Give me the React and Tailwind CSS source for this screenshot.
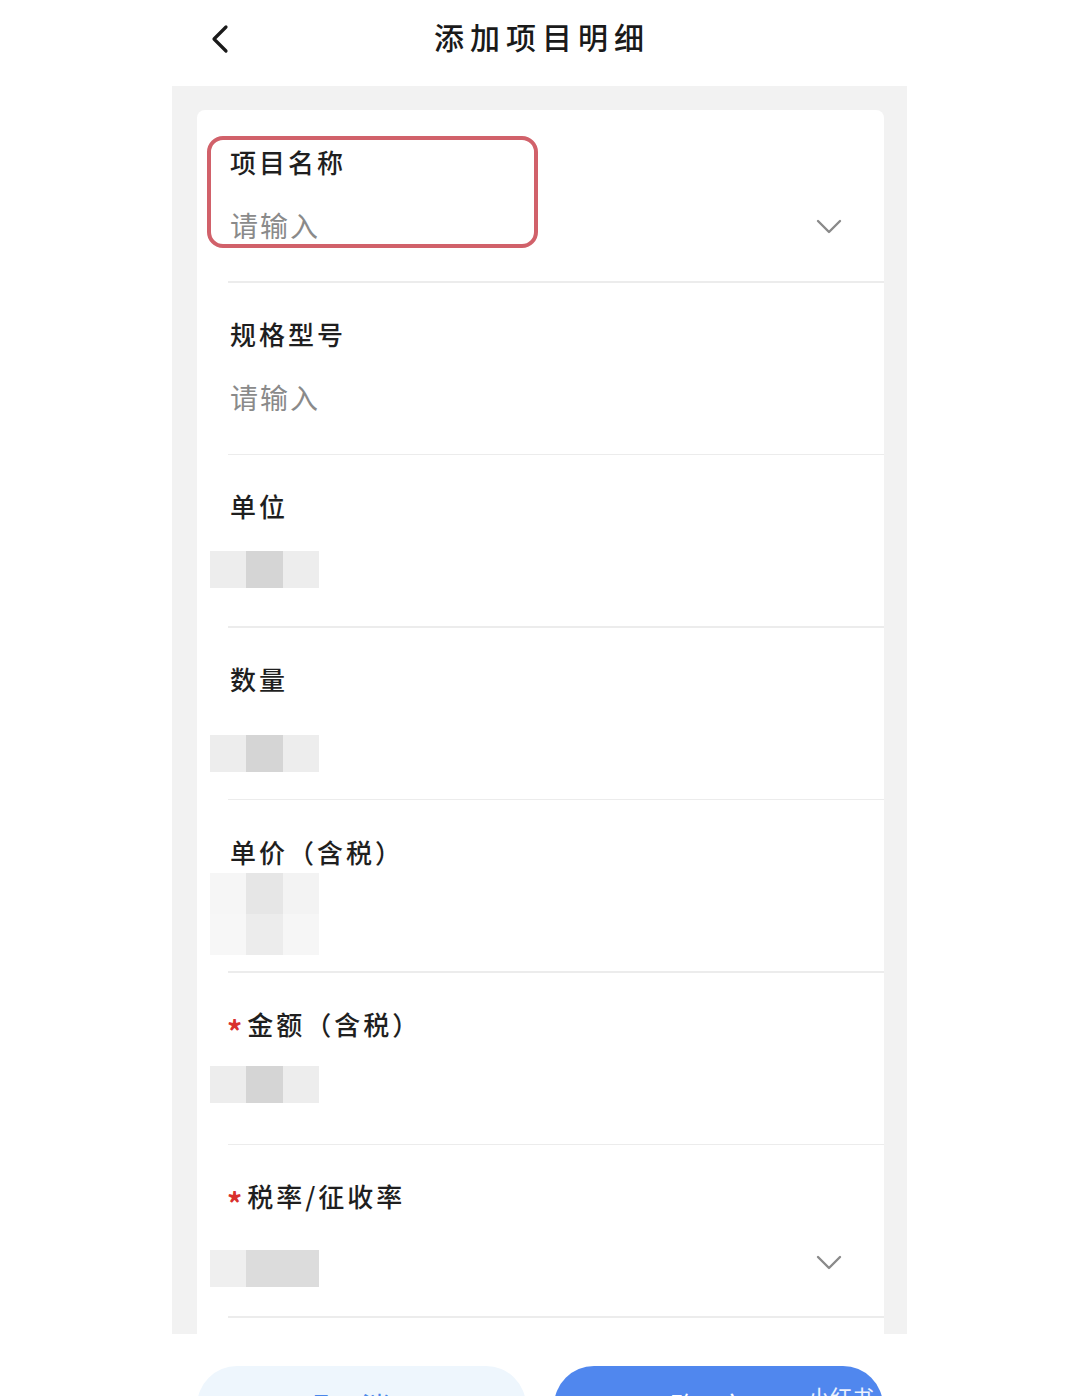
import React from "react";

const font = { fontFamily: '"Noto Sans CJK SC", "Noto Sans", sans-serif' };

function ChevronDown({ className = "" }) {
  return (
    <svg className={className} width="26" height="16" viewBox="0 0 26 16" fill="none">
      <polyline points="2,2 13,13 24,2" stroke="#8a8a8a" strokeWidth="2.4" strokeLinecap="round" strokeLinejoin="round" />
    </svg>
  );
}

function Mosaic({ variant }) {
  if (variant === "double") {
    return (
      <div className="flex flex-col">
        <div className="flex">
          <div className="w-[36px] h-[41px] bg-[#f6f6f6]" />
          <div className="w-[37px] h-[41px] bg-[#e6e6e6]" />
          <div className="w-[36px] h-[41px] bg-[#f3f3f3]" />
        </div>
        <div className="flex">
          <div className="w-[36px] h-[41px] bg-[#f7f7f7]" />
          <div className="w-[37px] h-[41px] bg-[#ececec]" />
          <div className="w-[36px] h-[41px] bg-[#f6f6f6]" />
        </div>
      </div>
    );
  }
  if (variant === "wide") {
    return (
      <div className="flex">
        <div className="w-[36px] h-[37px] bg-[#efefef]" />
        <div className="w-[73px] h-[37px] bg-[#dcdcdc]" />
      </div>
    );
  }
  return (
    <div className="flex">
      <div className="w-[36px] h-[37px] bg-[#ededed]" />
      <div className="w-[37px] h-[37px] bg-[#d5d5d5]" />
      <div className="w-[36px] h-[37px] bg-[#ededed]" />
    </div>
  );
}

function Row({ label, required, children, chevron, chevronClass = "", labelPt = "pt-[35px]", valueMt = "mt-[24px]" }) {
  return (
    <div className="relative h-[172.5px] shrink-0">
      <div className={`${labelPt} ${required ? "pl-[30px]" : "pl-[33px]"} flex items-center`}>
        {required && (
          <span className="text-[#d9302c] text-[30px] leading-[34px] mr-[5px] mt-[12px] font-bold">*</span>
        )}
        <span className="text-[26px] leading-[34px] text-[#1f1f1f] font-medium tracking-[3px]">{label}</span>
      </div>
      <div className={`${valueMt} flex items-center justify-between pr-[42px]`}>
        {children}
        {chevron && <ChevronDown className={chevronClass} />}
      </div>
      <div className="absolute bottom-0 left-[31px] right-0 h-[1.5px] bg-[#ececec]" />
    </div>
  );
}

export default function App() {
  return (
    <div className="w-[1080px] h-[1396px] bg-white overflow-hidden" style={font}>
      {/* header */}
      <div className="relative h-[86px] flex items-center justify-center">
        <div className="absolute left-[208px] top-[24px]">
          <svg width="24" height="30" viewBox="0 0 24 30" fill="none">
            <polyline points="18,3 6,15 18,27" stroke="#1a1a1a" strokeWidth="3.2" strokeLinecap="round" strokeLinejoin="round" />
          </svg>
        </div>
        <div className="text-[30px] leading-[40px] text-[#1a1a1a] font-medium tracking-[6px] -mt-[14px] pl-[4px]">添加项目明细</div>
      </div>

      {/* panel */}
      <div className="ml-[172px] w-[735px] h-[1248px] bg-[#f2f2f2] pt-[24px] pl-[25px] pr-[23px] overflow-hidden">
        <div className="relative bg-white rounded-t-[8px] h-[1300px] flex flex-col">
          <Row label="项目名称" chevron chevronClass="translate-y-[2px]" labelPt="pt-[35px]" valueMt="mt-[26px]">
            <span className="text-[28px] leading-[40px] text-[#8a8a8a] pl-[33px] tracking-[2px]">请输入</span>
          </Row>
          <Row label="规格型号" labelPt="pt-[34px]" valueMt="mt-[26px]">
            <span className="text-[28px] leading-[40px] text-[#8a8a8a] pl-[33px] tracking-[2px]">请输入</span>
          </Row>
          <Row label="单位" labelPt="pt-[34px]" valueMt="mt-[28px]">
            <div className="pl-[13px]"><Mosaic /></div>
          </Row>
          <Row label="数量" labelPt="pt-[34px]" valueMt="mt-[39px]">
            <div className="pl-[13px]"><Mosaic /></div>
          </Row>
          <Row label="单价（含税）" labelPt="pt-[35px]" valueMt="mt-[4px]">
            <div className="pl-[13px]"><Mosaic variant="double" /></div>
          </Row>
          <Row label="金额（含税）" required labelPt="pt-[28px]" valueMt="mt-[19px]">
            <div className="pl-[13px]"><Mosaic /></div>
          </Row>
          <Row label="税率/征收率" required chevron chevronClass="-translate-y-[6px]" labelPt="pt-[28px]" valueMt="mt-[31px]">
            <div className="pl-[13px]"><Mosaic variant="wide" /></div>
          </Row>

          {/* red annotation box */}
          <div className="absolute left-[10px] top-[26px] w-[331px] h-[112px] border-[4px] border-[#d1616a] rounded-[16px]" />
        </div>
      </div>

      {/* buttons */}
      <div className="flex justify-between ml-[197px] w-[686px] mt-[32px]">
        <div className="w-[329px] h-[80px] rounded-[40px] bg-[#eef6fd] flex items-center justify-center text-[28px] text-[#4a86ea] tracking-[20px]">取消</div>
        <div className="relative w-[329px] h-[80px] rounded-[40px] bg-[#5087ee] flex items-center justify-center text-[28px] text-white tracking-[20px]">
          确定
          <span className="absolute left-[254px] top-[14px] text-[22px] tracking-normal text-white/90">小红书</span>
        </div>
      </div>
    </div>
  );
}
